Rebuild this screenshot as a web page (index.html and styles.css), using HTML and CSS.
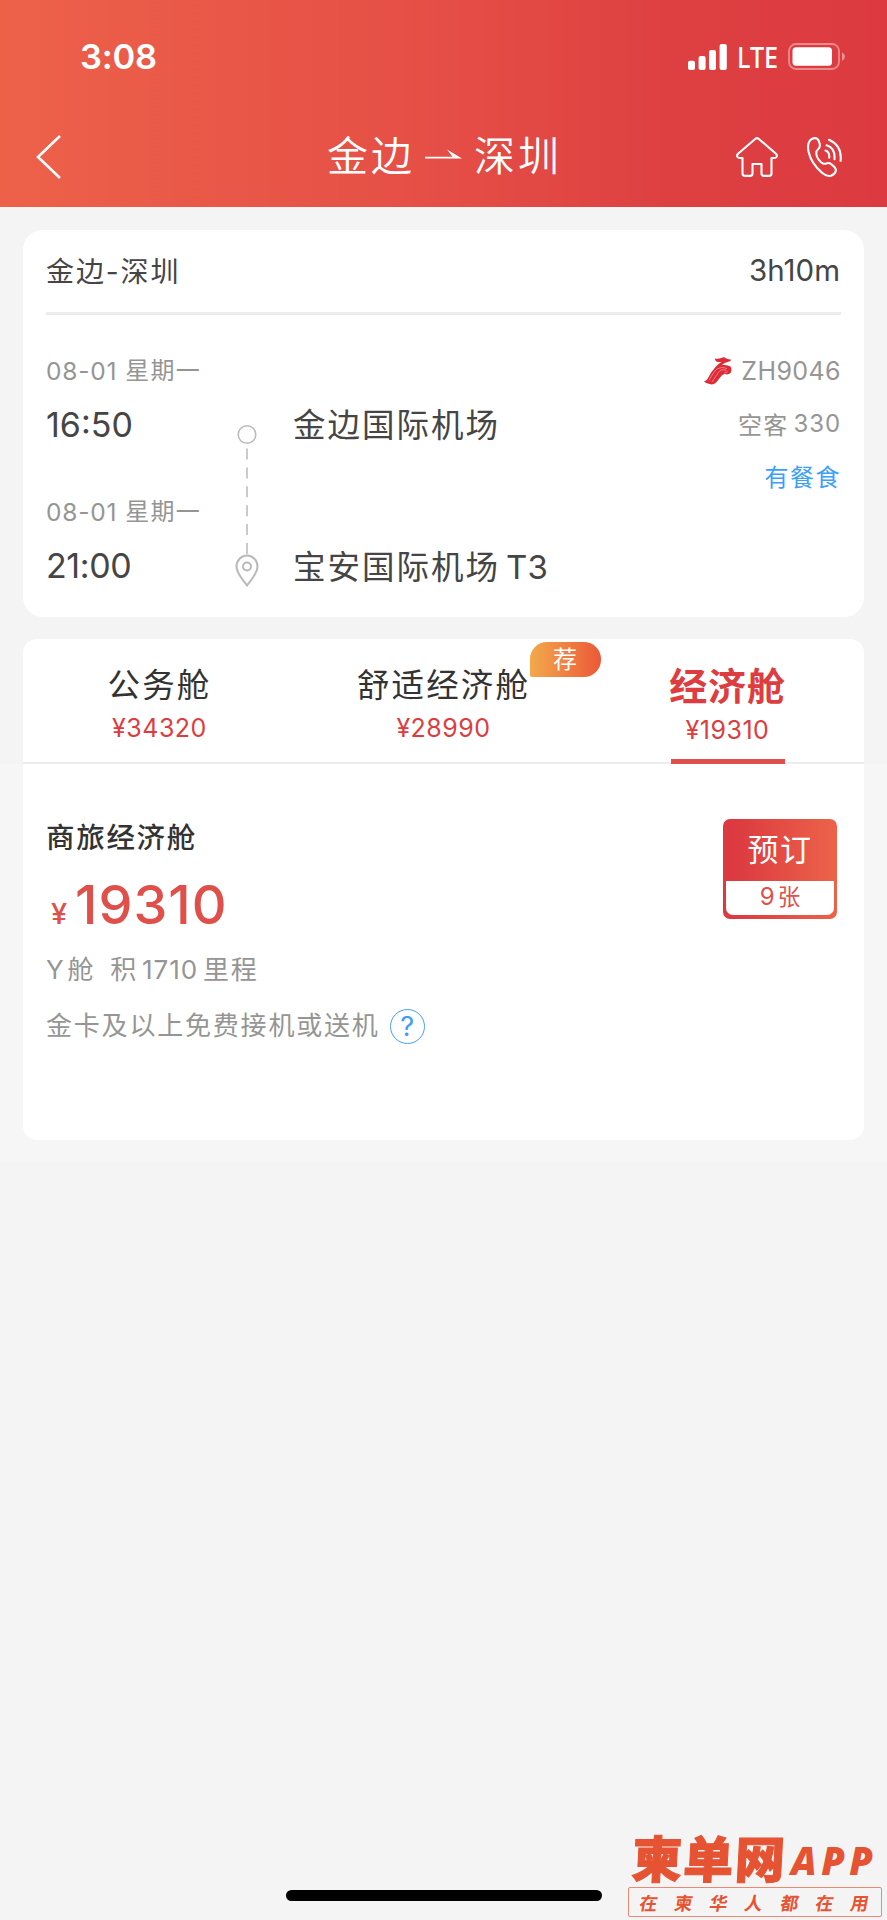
FILE: index.html
```html
<!DOCTYPE html>
<html lang="zh-CN">
<head>
<meta charset="utf-8">
<title>金边 - 深圳</title>
<link rel="stylesheet" href="styles.css">
</head>
<body>
<div class="screen">
  <header class="header">
    <div class="status">
      <span class="clock">3:08</span>
      <div class="status-icons">
        <svg class="signal" width="39" height="26" viewBox="0 0 39 26" fill="#fff">
          <rect x="0" y="16.7" width="7" height="9.3" rx="2"/><rect x="10.6" y="12" width="7" height="14" rx="2"/><rect x="21" y="6" width="7" height="20" rx="2"/><rect x="31.6" y="0" width="7.2" height="26" rx="2"/>
        </svg>
        <span class="lte">LTE</span>
        <svg class="battery" width="58" height="27" viewBox="0 0 58 27">
          <rect x="1" y="1" width="50" height="25" rx="7" fill="none" stroke="#fff" stroke-opacity=".4" stroke-width="1.8"/>
          <rect x="4.5" y="4.3" width="39.5" height="18.4" rx="3.5" fill="#fff"/>
          <path d="M54 9.5c3.8 1.6 3.8 6.6 0 8.2z" fill="#fff" fill-opacity=".45"/>
        </svg>
      </div>
    </div>
    <nav class="navbar">
      <svg class="back" width="26" height="44" viewBox="0 0 26 44" fill="none" stroke="#fff" stroke-width="2.6"><path d="M24 1 2 22l22 21"/></svg>
      <h1 class="title"><span>金边</span><svg class="arrow" width="37" height="12" viewBox="0 0 37 12" fill="#fff"><path d="M0 7.700h27.500L22 .5 37 9.500H0z"/></svg><span>深圳</span></h1>
      <svg class="home" width="42" height="40" viewBox="0 0 42 40" fill="none" stroke="#fff" stroke-width="2.100" stroke-linejoin="round"><path d="M19.5 1.7q1.500-1.200 3 0L40 16.800q1.500 1.700.5 3.200-.7 1-2.300 1h-2.700v15.500q0 2.400-2.400 2.400h-5.200q-2.400 0-2.400-2.400V27h-9v9.500q0 2.400-2.400 2.400H8.900q-2.400 0-2.400-2.400V21H3.800Q2.200 21 1.500 20q-1-1.500.5-3.200z"/></svg>
      <svg class="phone" width="36" height="40" viewBox="0 0 36 40" fill="none" stroke="#fff" stroke-width="2.100" stroke-linecap="round" stroke-linejoin="round">
        <path d="M4.500 2.200Q8 .2 10.400 1.900q1.600 1.400 2.300 5 .7 3.500-1.600 5.400-2 1.700-1.800 4.200.3 4.700 4.700 8.700 2.800 2.300 5.200 1.300 2.600-1.200 5.200.8 4.700 3.600 4.500 6.200-.5 3.400-5 5.300-3.600 1-9-3.200Q4.200 26.500 1.500 14.500-.2 5.500 4.500 2.200z"/>
        <path d="M18.500 13.600q4.200 1.400 3.700 7M19.600 8.300q8.800 2.700 7.900 14M22 2.800q13.200 6 11.600 21"/>
      </svg>
    </nav>
  </header>

  <section class="card flight">
    <div class="flight-head"><span class="route">金边-深圳</span><span class="duration">3h10m</span></div>
    <div class="flight-body">
      <div class="times">
        <div class="date"><span class="num">08-01</span><span>星期一</span></div>
        <div class="time">16:50</div>
        <div class="date second"><span class="num">08-01</span><span>星期一</span></div>
        <div class="time late">21:00</div>
      </div>
      <svg class="track" width="24" height="164" viewBox="0 0 24 164" fill="none" stroke="#b9b9b9">
        <circle cx="12" cy="10.500" r="8.800" stroke-width="1.500"/>
        <path d="M12 24.500V131" stroke-width="1.500" stroke-dasharray="11 7.900"/>
        <path d="M12 161.500C7 155 1.500 149 1.500 142.500a10.500 11 0 0 1 21 0C22.500 149 17 155 12 161.500z" stroke-width="2"/>
        <circle cx="12" cy="142.500" r="4" stroke-width="2"/>
      </svg>
      <div class="airports">
        <div class="airport">金边国际机场</div>
        <div class="airport">宝安国际机场<span class="terminal">T3</span></div>
      </div>
      <div class="meta">
        <div class="meta-row">
          <svg class="airline" width="28" height="28" viewBox="0 0 28 28">
            <path d="M11 1.500q3 1 7-.8 2.800-1 4 .8 2.500 1 5.500 1.300-1.200 1.700-3.800 2.100-3.600.5-5.700 3.100Q24 7.500 26.500 9.500 28.500 13 26.500 16q-2.500 2.300-6 .8-3 1.200-5 4.500-2.800 4.400-5.500 5.700-2.400.8-4.500-.1Q1.500 26.500 0 24.200q2.400-.5 3.600-2.500Q7.500 14 12 9.500q2.200-2.500 5.800-4.700-3.300.5-5.300-.4Q10.600 3.300 11 1.500z" fill="#df2b36"/>
            <path d="M5 23.500Q10 14 13.500 11.700q5-2.500 9.500-.2M8 25q4-6 6.500-9.800 2.500-3.700 8-1.700M20.500 15.500q2.500.8 3-1" fill="none" stroke="#fff" stroke-opacity=".5" stroke-width=".8"/>
          </svg>
          <span class="flight-no">ZH9046</span>
        </div>
        <div class="meta-row plane"><span>空客</span><span class="model">330</span></div>
        <div class="meta-row meal">有餐食</div>
      </div>
    </div>
  </section>

  <section class="card cabins">
    <div class="tabs">
      <div class="tab"><div class="tab-name">公务舱</div><div class="tab-price">¥34320</div></div>
      <div class="tab"><div class="tab-name">舒适经济舱</div><div class="tab-price">¥28990</div><span class="badge">荐</span></div>
      <div class="tab active"><div class="tab-name">经济舱</div><div class="tab-price">¥19310</div></div>
    </div>
    <div class="fare">
      <div class="fare-info">
        <h2 class="fare-name">商旅经济舱</h2>
        <div class="price"><span class="yen">¥</span><span class="amount">19310</span></div>
        <div class="detail"><span>Y</span><span class="cabin">舱</span><span>积</span><span class="miles">1710</span><span>里程</span></div>
        <div class="detail perk"><span>金卡及以上免费接机或送机</span><span class="help">?</span></div>
      </div>
      <button class="book"><span class="book-label">预订</span><span class="book-left"><span class="nine">9</span>张</span></button>
    </div>
  </section>

  <footer class="footer">
    <div class="home-bar"></div>
    <div class="mark">
      <div class="mark-top"><span class="mark-name">柬单网</span><span class="mark-app">APP</span></div>
      <div class="mark-box"><span>在</span><span>柬</span><span>华</span><span>人</span><span>都</span><span>在</span><span>用</span></div>
    </div>
  </footer>
</div>
</body>
</html>
```
FILE: styles.css
```css
* { box-sizing: border-box; margin: 0; padding: 0; }
body {
  width: 887px; height: 1920px; overflow: hidden;
  background: linear-gradient(#f4f4f4 764px, #f6f6f6 764px, #f6f6f6 1161px, #f4f4f4 1161px);
  font-family: Inter, "Noto Sans CJK SC", sans-serif;
  color: #454545;
}
svg { display: block; flex: none; }
span { white-space: nowrap; }
.screen { display: flex; flex-direction: column; width: 887px; height: 1920px; }

.header { height: 207px; flex: none; background: linear-gradient(90deg, #ed6149, #e54e46 50%, #de4041 75%, #dc3a40); color: #fff; }
.status { display: flex; justify-content: space-between; height: 113px; padding: 0 41px 0 80px; align-items: center; }
.clock { font-size: 34.500px; font-weight: 600; line-height: 42px; letter-spacing: -.2px; }
.status-icons { display: flex; align-items: center; }
.lte { width: 40px; margin: 0 11px 0 10px; font: 500 28px/34px "Noto Sans", sans-serif; transform: scaleX(.9); transform-origin: 0 50%; }
.navbar { display: flex; height: 88px; padding-left: 36px; align-items: center; }
.title { display: flex; align-items: center; margin-left: 265px; font-size: 41px; font-weight: 350; line-height: 48px; letter-spacing: 3px; padding-bottom: 2px; }
.arrow { margin: 0 12px 2px 10px; }
.home { margin-left: 174px; }
.phone { margin-left: 29px; }

.card { width: 841px; margin-left: 23px; background: #fff; flex: none; }
.flight { height: 387px; margin-top: 23px; border-radius: 20px; padding: 0 23px; }
.flight-head { display: flex; justify-content: space-between; align-items: center; height: 85px; border-bottom: 3px solid #ededed; padding: 0 1px 3px 0; }
.route { font-size: 28px; letter-spacing: 1.900px; }
.duration { font-size: 29.500px; letter-spacing: 0; }
.flight-body { display: flex; }
.times { width: 189px; padding-top: 38px; }
.date { display: flex; gap: 8px; height: 36px; line-height: 36px; font-size: 24px; letter-spacing: 1.200px; color: #959595; }
.date .num { font-size: 24.500px; letter-spacing: .8px; }
.time { height: 70px; line-height: 72px; font-size: 34px; letter-spacing: 0; }
.late { letter-spacing: -.4px; }
.second { margin-top: 35px; }
.track { margin-top: 109px; }
.airports { width: 400px; padding: 76px 0 0 34px; }
.airport { height: 141px; line-height: 70px; font-size: 32.500px; letter-spacing: 2px; }
.terminal { margin-left: 6px; letter-spacing: .2px; font-size: 33px; }
.meta { flex: 1; padding-top: 29px; color: #959595; font-size: 25px; }
.meta-row { display: flex; justify-content: flex-end; align-items: center; height: 53px; }
.airline { margin-right: 9px; }
.flight-no { letter-spacing: .4px; }
.plane { gap: 5px; font-size: 24px; letter-spacing: 1.200px; padding-bottom: 1px; }
.model { letter-spacing: .9px; }
.meal { color: #3ba0fb; font-size: 24px; letter-spacing: 1.500px; padding-bottom: 3px; }

.cabins { height: 501px; margin-top: 22px; border-radius: 14px; }
.tabs { display: grid; grid-template-columns: repeat(3, 284px); justify-content: center; height: 125px; background: linear-gradient(#ececec, #ececec) 0 100% / 100% 2px no-repeat; }
.tab { position: relative; display: flex; flex-direction: column; align-items: center; padding-top: 22px; }
.tab-name { height: 49px; line-height: 50px; font-size: 32.500px; letter-spacing: 2.100px; color: #333; white-space: nowrap; }
.tab-price { height: 36px; line-height: 36px; font-size: 25px; letter-spacing: .5px; color: #dd3d40; }
.active::after { content: ""; position: absolute; bottom: 0; left: 85px; width: 114px; height: 5px; background: #e04f4b; }
.active .tab-name { height: 51px; font-size: 38px; font-weight: 700; color: #dd3d40; letter-spacing: .8px; }
.badge { position: absolute; left: 228px; top: 3px; width: 71px; height: 35px; border-radius: 17px 17px 17px 2px; background: linear-gradient(90deg, #f2a94b, #ec5838); color: #fff; font-size: 24px; line-height: 36px; text-align: center; }
.fare { display: flex; justify-content: space-between; padding: 54px 27px 0 23px; }
.fare-name { height: 40px; line-height: 40px; font-size: 28.500px; font-weight: 500; letter-spacing: 1.700px; color: #333; }
.price { display: flex; align-items: baseline; height: 70px; margin-top: 12px; line-height: 70px; color: #e0504b; font-weight: 500; }
.yen { width: 29px; padding-left: 5px; font-size: 29px; }
.amount { font-size: 54px; letter-spacing: 1px; }
.detail { display: flex; height: 40px; margin-top: 10px; line-height: 40px; font-size: 26px; letter-spacing: 1.800px; color: #959595; }
.detail .cabin { margin: 0 15px 0 2px; }
.miles { margin: 0 5px 0 4px; letter-spacing: .9px; }
.perk { margin-top: 16px; align-items: center; }
.help { width: 35px; height: 35px; margin-left: 10px; border: 1.500px solid #4a9ff6; border-radius: 50%; color: #3c9bf8; font-size: 27px; line-height: 33px; text-align: center; letter-spacing: 0; }
.book { display: flex; flex-direction: column; width: 114px; height: 100px; margin-top: 1px; padding: 0 3px 4px; border: 0; border-radius: 7px; background: linear-gradient(90deg, #dc3a40 10%, #ec6349); font-family: inherit; }
.book-label { height: 62px; line-height: 62px; color: #fff; font-size: 31px; letter-spacing: 1.500px; text-align: center; width: 100%; }
.book-left { height: 34px; width: 100%; line-height: 32px; border-radius: 0 0 7px 7px; background: #fff; color: #e0504b; font-size: 22.500px; text-align: center; }
.nine { margin-right: 3px; font-size: 24px; }

.footer { display: flex; align-items: flex-end; height: 90px; margin-top: auto; padding-left: 286px; }
.home-bar { width: 316px; height: 11px; margin: 0 26px 19px 0; border-radius: 6px; background: #000; }
.mark { width: 254px; margin-bottom: 3px; color: #e65332; font-family: "Noto Sans CJK SC", sans-serif; }
.mark-top { display: flex; align-items: center; height: 56px; }
.mark-name { width: 163px; padding: 0 0 6px 4px; font-size: 50px; font-weight: 900; line-height: 50px; letter-spacing: 1.500px; transform: skewX(-3deg); -webkit-text-stroke: 1px #e65332; }
.mark-app { font: italic 800 38px/50px "Open Sans", sans-serif; letter-spacing: 4.500px; margin-top: 2px; }
.mark-box { display: flex; justify-content: space-between; align-items: center; height: 30px; padding: 0 12px 0 11px; border: 1px solid #eb8a72; border-radius: 2px; font-size: 18px; font-weight: 700; }
.mark-box span { transform: skewX(-10deg); }
```
